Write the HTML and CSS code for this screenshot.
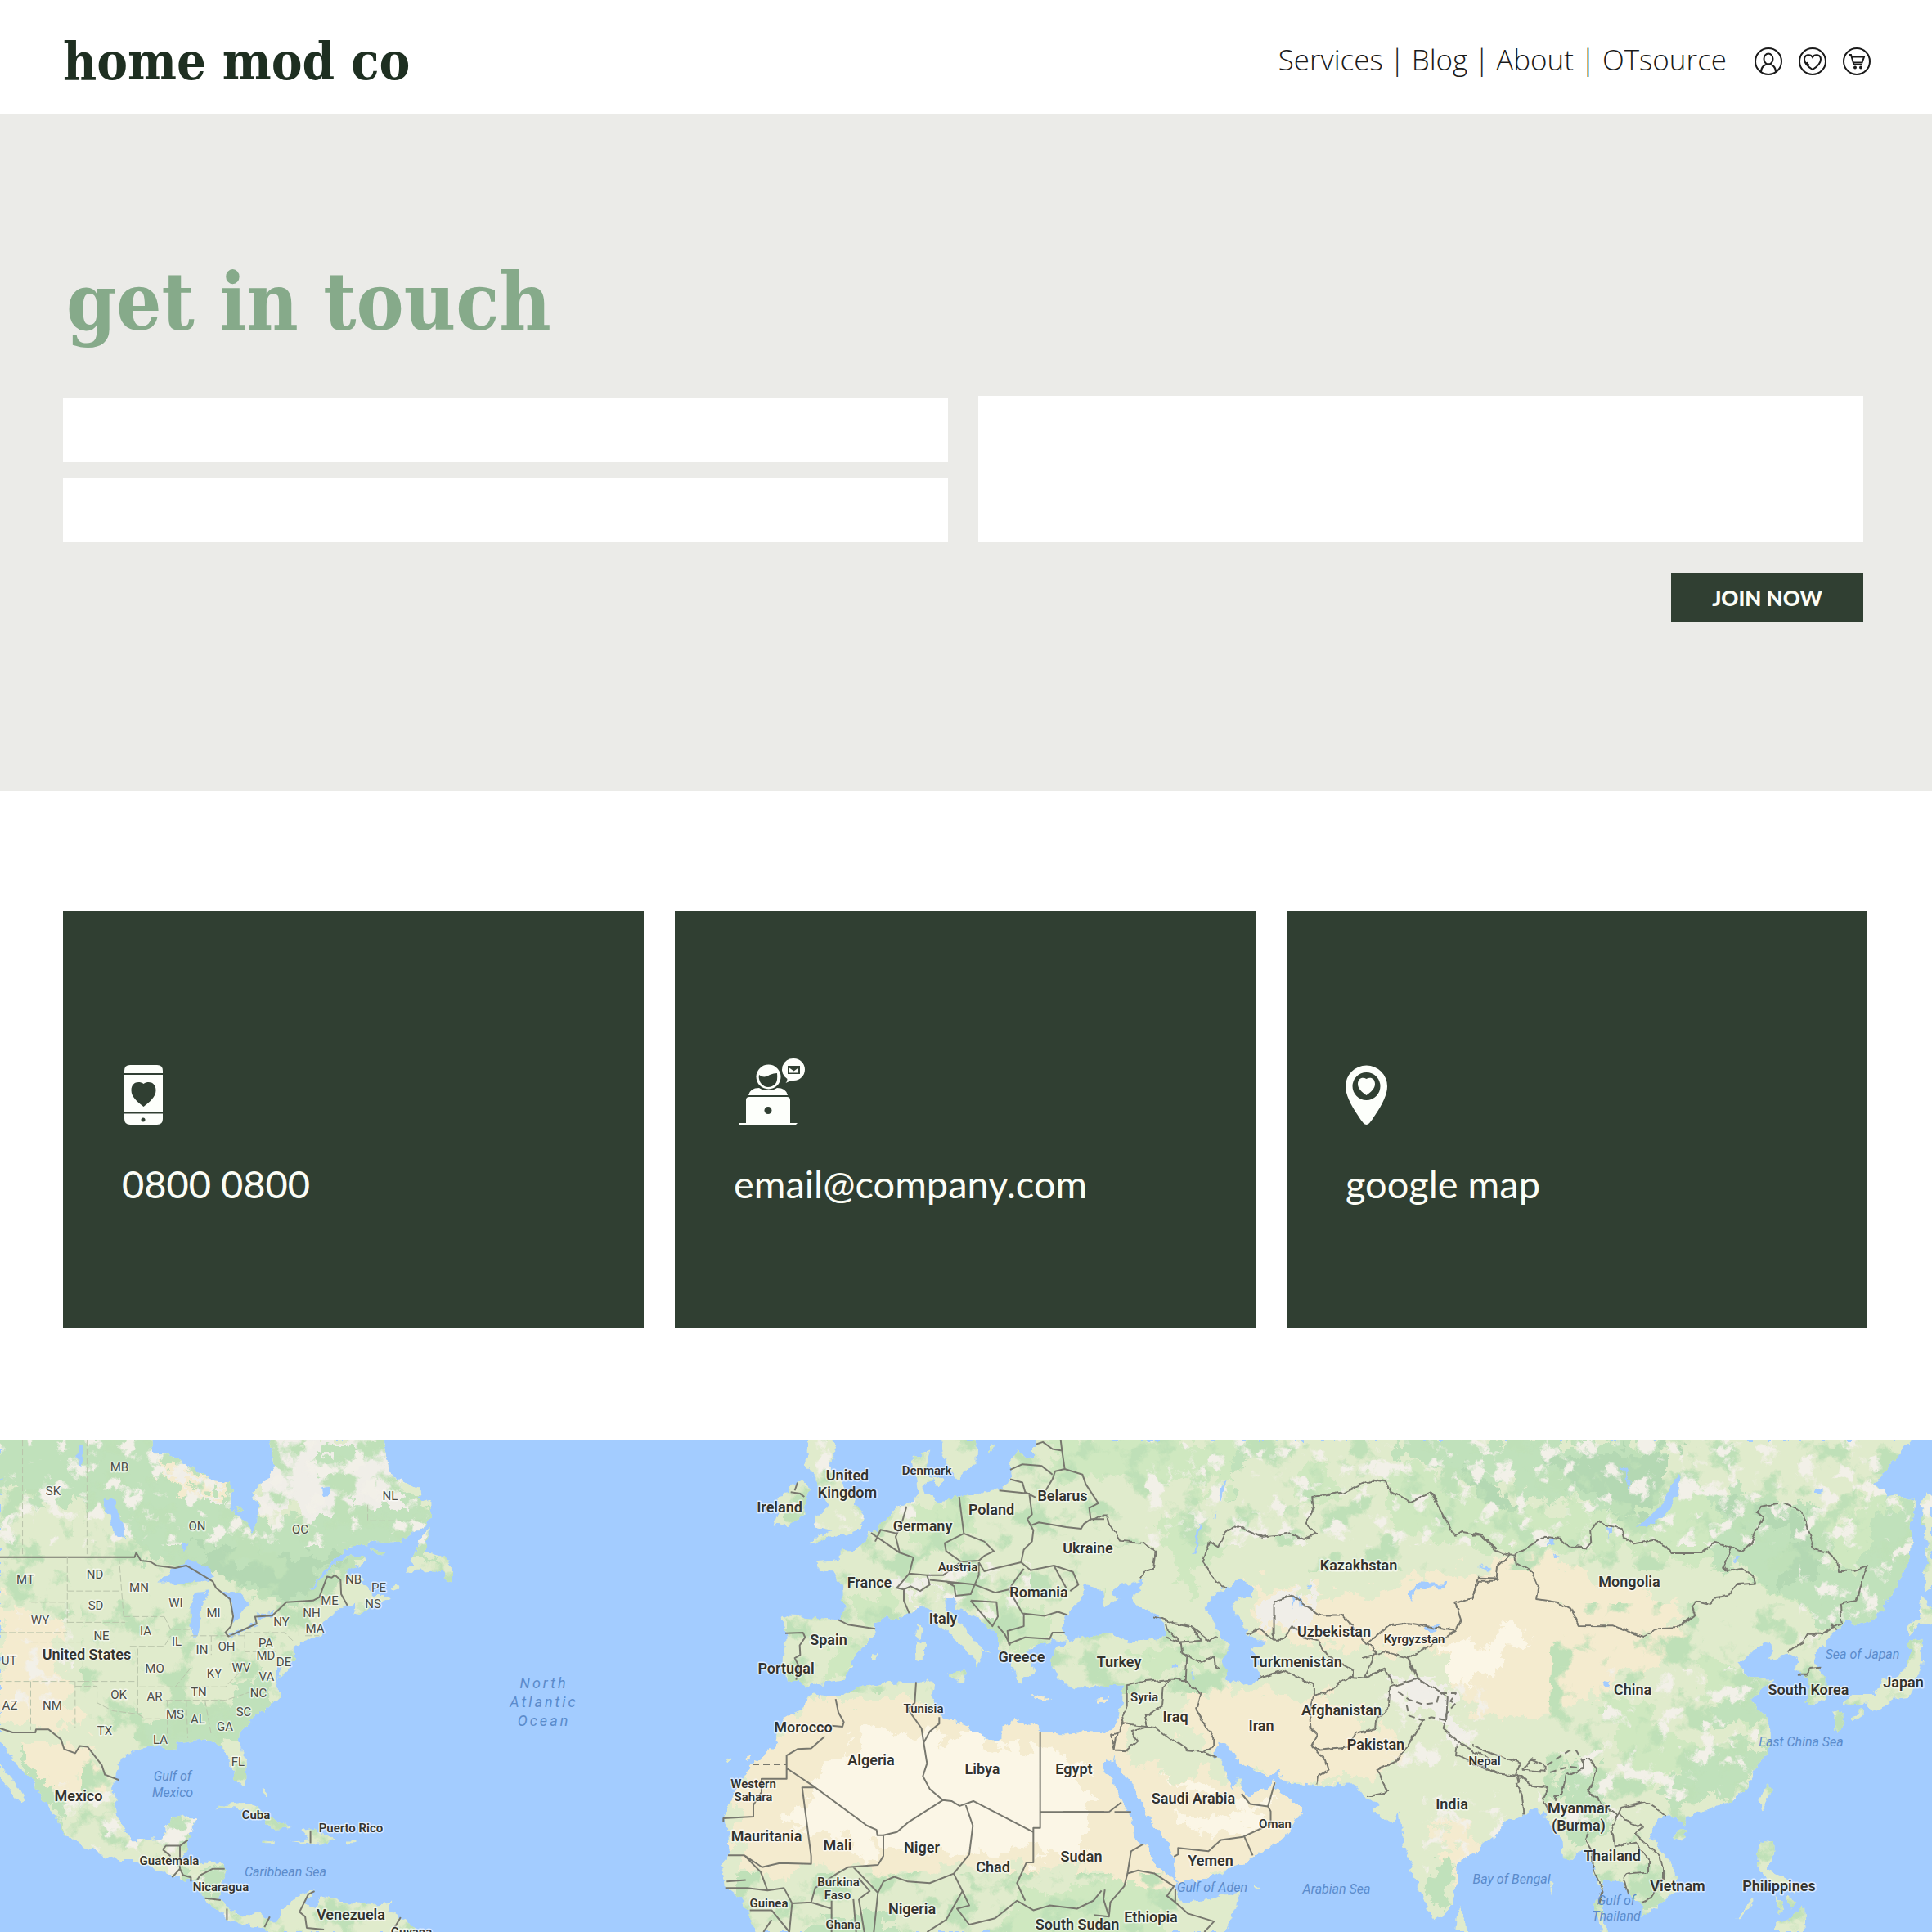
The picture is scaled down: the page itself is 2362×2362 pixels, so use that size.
FILE: index.html
```html
<!DOCTYPE html>
<html lang="en">
<head>
<meta charset="utf-8">
<meta name="viewport" content="width=device-width, initial-scale=1">
<title>home mod co – get in touch</title>
<link rel="stylesheet" href="styles.css">
</head>
<body>
<header class="site-header">
  <a class="logo" href="#">home mod co</a>
  <div class="header-right">
    <nav class="nav" aria-label="Main">
      <a href="#">Services</a><span>|</span><a href="#">Blog</a><span>|</span><a href="#">About</a><span>|</span><a href="#">OTsource</a>
    </nav>
    <div class="tools">
      <a href="#" aria-label="Account">
        <svg viewBox="0 0 36 36"><circle cx="18" cy="18" r="16"/><ellipse cx="18" cy="15" rx="5.5" ry="6.5"/><path d="M9 31c0-6 4-9.500 9-9.500s9 3.500 9 9.500"/></svg>
      </a>
      <a href="#" aria-label="Favourites">
        <svg viewBox="0 0 36 36"><circle cx="18" cy="18" r="16"/><path d="M18 28c-5-3-10-8-10-12.500 0-6 7.500-7 10-2.500 2.500-4.500 10-3.500 10 2.500C28 20 23 25 18 28zM11 19c.5 1.500 1.500 3 3 4"/></svg>
      </a>
      <a href="#" aria-label="Cart">
        <svg viewBox="0 0 36 36"><circle cx="18" cy="18" r="16"/><path d="M8 10h3l3.500 12h10M12 12.500h15l-2.500 7H14"/><circle cx="16" cy="25.500" r="1"/><circle cx="23" cy="25.500" r="1"/></svg>
      </a>
    </div>
  </div>
</header>

<main>
  <section class="contact">
    <h1>get in touch</h1>
    <form class="form">
      <div class="fields">
        <input type="text" aria-label="Name">
        <input type="email" aria-label="Email">
      </div>
      <textarea aria-label="Message"></textarea>
      <button type="button">JOIN NOW</button>
    </form>
  </section>

  <section class="cards">
    <a class="card" href="#">
      <svg viewBox="0 0 90 84" aria-hidden="true">
        <path d="M3 20v-3q0-7 7-7h33q7 0 7 7v3zM3 22h47v45H3zM3 69.500h47V76q0 7-7 7H10q-7 0-7-7z"/>
        <path class="cut" d="M26.500 61C19 55 11.500 49 11.500 41c0-10 9-12 15-8 6-4 15-2 15 8 0 8-7.500 14-15 20z"/><circle class="cut" cx="26" cy="77" r="2.500"/>
      </svg>
      <span>0800 0800</span>
    </a>
    <a class="card" href="#">
      <svg viewBox="0 0 90 84" aria-hidden="true">
        <path d="M7 81h8V53q0-4 4-4h46q4 0 4 4v28h9l-2 2H7zM18 47q2-9 13-9 4 3 11 3t11-3q11 0 13 9z"/>
        <circle cx="42.500" cy="24.500" r="15"/><path class="cut" d="M31 22q6 5 13 0 5-2 9-2 1 9-2 13-4 4-9 4t-9-5q-3-5-2-10z"/>
        <circle class="cut" cx="42" cy="65.500" r="4.500"/>
        <path d="M73.500 2a13.500 13.500 0 0 1 0 27q-5 0-10 3 2-2 2-5A13.500 13.500 0 0 1 73.500 2z"/><path class="cut" d="M66 11h15v10H66z"/><path d="M68 13.500l5.500 4 5.500-4V19.500H68z"/>
      </svg>
      <span>email@company.com</span>
    </a>
    <a class="card" href="#">
      <svg viewBox="0 0 90 84" aria-hidden="true">
        <path fill-rule="evenodd" d="M25.500 83Q22 83 16 73 0 50 0 36a25.500 25.500 0 0 1 51 0q0 14-16 37-6 10-9.500 10zM8.500 36a17 17 0 0 0 34 0 17 17 0 0 0-34 0z"/>
        <path d="M25.500 47C20 43 15 39 15 33c0-7 6-9 10.500-6C30 24 36 26 36 33c0 6-5 10-10.500 14z"/>
      </svg>
      <span>google map</span>
    </a>
  </section>

  <section class="map" aria-label="World map">
  <svg viewBox="0 0 2362 602" role="img">
    <defs>
      <filter id="rough" x="0" y="0" width="100%" height="100%" color-interpolation-filters="sRGB">
        <feTurbulence type="fractalNoise" baseFrequency=".09" numOctaves="3" seed="4"/>
        <feDisplacementMap in="SourceGraphic" scale="11" xChannelSelector="R" yChannelSelector="G"/>
      </filter>
      <filter id="wobble" x="0" y="0" width="100%" height="100%" color-interpolation-filters="sRGB">
        <feTurbulence type="fractalNoise" baseFrequency=".03" numOctaves="2" seed="4"/>
        <feDisplacementMap in="SourceGraphic" scale="18" xChannelSelector="R" yChannelSelector="G"/>
      </filter>
      <filter id="ragged" x="-10%" y="-10%" width="120%" height="120%" color-interpolation-filters="sRGB">
        <feTurbulence type="fractalNoise" baseFrequency=".035" numOctaves="5" seed="9"/>
        <feDisplacementMap in="SourceGraphic" scale="60" xChannelSelector="R" yChannelSelector="G"/>
      </filter>
      <filter id="flecks" x="0" y="0" width="100%" height="100%" color-interpolation-filters="sRGB">
        <feTurbulence type="fractalNoise" baseFrequency=".04" numOctaves="6" seed="21"/>
        <feColorMatrix values="0 0 0 0 .95  0 0 0 0 .94  0 0 0 0 .91  9 0 0 0 -5.100"/>
        <feComposite in2="SourceAlpha" operator="in"/>
      </filter>
      <filter id="woods" x="0" y="0" width="100%" height="100%" color-interpolation-filters="sRGB">
        <feTurbulence type="fractalNoise" baseFrequency=".025" numOctaves="5" seed="7"/>
        <feColorMatrix values="0 0 0 0 .75  0 0 0 0 .88  0 0 0 0 .72  9 0 0 0 -4.900"/>
        <feComposite in2="SourceAlpha" operator="in"/>
      </filter>
      <path id="america" transform="matrix(.38265 0 0 .39031 0 -10)" d="M-20 0H480L490 75L545 75L590 100L640 130L690 155L740 160L738 235L755 260L790 285L800 315L822 300L828 255L818 220L806 185L850 150L878 110L870 60L858 0H1222L1240 90L1245 130L1275 150L1335 180L1340 205L1378 225L1380 270L1350 300L1280 345L1190 350L1115 358L1060 410L1010 470L985 495L1000 490L1075 410L1120 388L1165 390L1170 410L1120 430L1105 450L1165 455L1160 480L1195 515L1245 515V525L1185 550L1145 580L1130 575L1140 540L1110 545L1050 575L1030 610L1020 640L970 655L935 680V710L920 750L895 770L900 740L885 740L890 800L892 830L850 870L800 905L768 935L765 970L790 1050V1095L775 1110L745 1080L735 1030L715 990L680 975L640 965L600 970L560 980V1000L500 985L440 995L390 1025L370 1070L365 1130L370 1190L400 1250L430 1280L520 1275L545 1215L590 1205L630 1210L610 1250L600 1300L580 1345H640L700 1350L718 1370L712 1420L700 1470L740 1500L780 1520L820 1505L860 1530L880 1540L900 1500L950 1460L1000 1435L975 1480L1010 1490L1030 1455L1090 1475L1190 1480L1250 1475L1240 1500L1280 1525L1400 1600H870L845 1555L790 1545L730 1530L700 1500L660 1480L620 1410L560 1395L500 1375L440 1345H390L330 1330L250 1290L190 1250L180 1210L150 1170L100 1090L50 1040L0 970ZM-20 1020L40 1090L80 1160L70 1165L30 1120L-20 1070ZM1380 300L1350 320L1320 400L1298 440L1380 435L1410 440L1445 475V420L1420 390L1360 375L1365 330ZM1175 362L1230 380L1215 388ZM1245 495L1270 475L1275 495L1250 505ZM690 1185L720 1168L780 1163L830 1188L880 1215L930 1240L870 1245L850 1220L780 1187L720 1177ZM930 1285L985 1280L960 1250L1000 1246L1070 1280L1010 1292ZM838 1283H880V1292H838ZM1102 1282H1138V1292H1102ZM838 1115L855 1135L845 1140ZM750 240L775 245L760 252Z"/>
      <path id="europe" transform="matrix(.33333 0 0 .39031 850 -10)" d="M1245 0V80L1215 85L1180 55L1160 90L1155 125L1160 155L1115 180L1075 185L1010 205L960 200L930 215L880 220L850 200L840 165L870 150L845 120L865 60L830 70L800 90L810 150L820 205L800 215L770 225L735 240L700 270L675 300L640 318L620 345L580 375L530 375V405L445 410L450 430L505 440L540 480L545 560L530 590L350 578L320 590L332 640L320 740L330 780L380 778L410 800L450 790L545 780L575 740L570 720L660 630V600L700 585L740 590L780 570L830 550L870 570L890 600L960 660L1020 700L1030 750L1050 705L1045 680L1085 695L1030 660L975 600L920 560L915 520L945 520L960 550L1030 580L1110 640V680L1160 730L1190 795L1215 770L1245 745L1220 710L1215 680L1300 660L1310 650L1370 660L1345 620L1370 560L1420 520L1430 480H1500V0ZM1310 685L1380 665L1440 655L1470 635H1500V800H1440L1390 800L1330 770L1305 730ZM893 0L905 70L940 130L960 150L1000 115L1030 100L1035 0ZM872 140H905L900 170L870 165ZM415 0H480L520 60L490 110L520 140L550 180L590 230L620 260L615 300L540 325L490 330L425 355L450 330L500 310L430 295L440 270L490 230L460 190L440 150L410 110V60ZM345 170L390 155L420 180L400 220V260L340 300L290 290L310 250L300 200L345 195ZM815 610H835L830 650L815 645ZM805 660H840L845 700L825 720L808 715ZM920 755L995 752L990 790L950 775ZM1230 828L1300 832L1290 842L1240 840ZM643 700H665V712H643ZM1080 40L1100 45L1080 75ZM425 815L450 830L515 835L600 800L700 790L800 785L850 775L880 795L870 830L880 860L900 895L1000 915L1010 940L1100 975L1130 960V920L1170 905L1240 920L1270 940L1400 955L1440 940L1500 955V1600H250L210 1540L200 1510L160 1460L110 1425L100 1370L125 1320L120 1240L103 1215L140 1140L180 1080L215 1040L300 985L305 940L330 900L390 870ZM105 1025L130 1030L120 1040ZM185 1020L205 1005L195 1030Z"/>
      <path id="midasia" transform="matrix(.33801 0 0 .39031 1300 -10)" d="M0 0H1580V1250L1500 1310L1425 1350L1420 1430L1400 1500L1345 1530L1320 1500L1260 1370L1230 1290L1215 1190L1190 1225L1150 1210L1120 1185L1145 1165L1090 1145L1050 1105L920 1110L800 1100L775 1060L740 1080L690 1060L640 1040L600 985L555 975L545 1005L580 1050L600 1090L620 1125L625 1090H640V1125L670 1140L740 1120L765 1090L780 1130L865 1185L830 1240L800 1270L740 1310L600 1370L520 1400L415 1415L400 1340L380 1290L300 1200L280 1150L240 1100L185 1035L188 1005L178 1040L155 1035L120 985L140 1040L200 1130L250 1230L260 1280L300 1300L340 1370L410 1410L405 1440L430 1475L500 1470L630 1445L625 1490L570 1600H0V950L80 940L160 945L190 920L210 850L215 795L100 800L0 795V660L100 640L150 630L250 660L330 650L370 640L365 600L320 565L250 535L270 490L300 460L245 475L190 490L180 510L200 525L150 550L140 520L130 490L65 480L10 560L0 600ZM120 838L165 833L150 850L125 850ZM1425 1490L1460 1540L1465 1600H1415ZM695 1424H715V1430H695Z"/>
      <path id="eastasia" transform="matrix(.35842 0 0 .39031 1800 -10)" d="M0 0H1530L1500 26L1440 90L1370 165L1400 185L1410 210L1470 200L1515 225L1500 290L1495 390L1440 500L1370 590L1310 605L1275 590L1245 620L1220 640L1205 665L1165 695L1170 730L1205 770L1210 830L1180 850H1140L1150 790L1140 770L1100 750L1110 710L1080 695L1010 720L1025 670L990 665L950 700L910 730L950 775H1035L1000 800L950 840L990 880L1015 940V990L960 1070L930 1120L880 1160L800 1185L725 1205L720 1235L700 1205L640 1210L605 1260L640 1310L690 1370L695 1440L640 1480L580 1525L590 1490L530 1440L500 1410L450 1405L440 1440V1500L470 1600H450L420 1490L440 1440L405 1350L380 1310L345 1345L310 1340L305 1280L265 1230L245 1190L215 1185L180 1200L120 1215L80 1250L30 1295L0 1320ZM1535 225L1550 190L1600 240V480L1540 500L1550 400L1545 300L1530 290ZM1530 525L1600 560V620L1530 600L1490 640L1480 610L1520 590ZM1490 660L1530 650L1535 720L1510 790L1495 835L1440 840L1370 880L1350 855L1290 855L1260 850L1300 825L1370 825L1400 780L1470 760L1490 710ZM1225 880L1255 870L1270 905L1250 945L1230 930L1240 900ZM1290 895L1330 868L1340 880L1300 905ZM1010 1110L1020 1130L990 1190L975 1150ZM680 1270L710 1245L735 1250L710 1285ZM980 1280L1030 1285L1025 1340L1005 1370L1070 1400L1105 1450L1050 1420L1000 1395L970 1365ZM1040 1455L1065 1475L1050 1510L1035 1490ZM1080 1450L1100 1470L1080 1495ZM1030 1540L1080 1530L1130 1490L1138 1600H1030ZM900 1525L955 1465L962 1470L905 1530ZM265 1410L275 1415L268 1450Z"/>
      <clipPath id="land"><use href="#america"/><use href="#europe"/><use href="#midasia"/><use href="#eastasia"/></clipPath>
    </defs>

    <rect class="sea" width="2362" height="602"/>
    <g filter="url(#rough)">
      <g clip-path="url(#land)">
        <rect class="plain" width="2362" height="602"/>
        <g filter="url(#ragged)">
          <g class="meadow">
            <path d="M1120 80L1180 70V130L1110 130ZM1040 190L1090 180L1100 220L1040 220ZM1280 0H1560L1500 60L1380 50L1290 40ZM1180 170L1290 220L1260 260L1180 200ZM1020 250L1060 260L1020 300ZM1310 270L1450 250L1480 290L1400 280ZM1240 560L1420 520V620H1200ZM2090 270L2170 300L2150 360L2080 330ZM1960 310L2100 380L2000 430ZM1420 90L1500 130L1450 200ZM1590 20L1650 60L1580 90ZM1700 30L1900 90L2100 60L2200 100L2340 60L2260 240L2100 150L1700 120Z"/>
          </g>
          <g class="forest">
            <path d="M-20-20H190L280 50L330 110L470 60L530 80V140L430 150L380 200L300 195L260 160L170 145L130 85L0 65Z"/>
            <path d="M160 340L260 330L330 280L345 310L280 370L180 380ZM40 240L70 250V300L45 290ZM30 380L60 420L80 470L70 480L30 420ZM205 470H245L220 520L270 530V560H230ZM1520 0L1540 20L1500 60ZM1700 0H2050L2040 60L1980 90L1850 60L1720 30ZM2100 60L2220 80L2250 160L2340 60V230L2220 240L2200 200L2100 150ZM1900 400L1960 400V480L1930 500ZM2080 380L2180 370L2120 440L2020 440ZM1740 530L1775 510L1765 590ZM990 580H1090V620H990ZM2100 320L2150 300L2160 350L2080 350ZM1940 530L2040 560L2000 590Z"/>
          </g>
          <g class="deep">
            <path d="M240 130L420 150L380 190L300 185L250 160ZM1880 20L2050 10L2040 60L1990 90L1920 60ZM1960 85L2030 100L2000 110ZM2110 70L2200 90L2240 150L2170 180L2190 110L2100 90ZM1780 20L1830 60L1870 90L1810 80Z"/>
          </g>
          <g class="sand">
            <path d="M0 200L70 220L80 290L90 350L0 350ZM20 370L110 370L130 420L70 440ZM1000 320H1360L1400 400L1580 420L1620 500L1400 560L1350 520L900 530V380ZM1440 300L1640 320L1720 380L1680 420L1560 420L1450 360ZM1520 170L1640 190L1880 140L1980 180L2060 210L2030 270L1900 330L1800 340L1760 250L1650 260L1540 240ZM180 20L280 60L240 70ZM1760 470L1800 480L1780 540Z"/>
          </g>
          <path class="pale" d="M1060 350L1240 370L1330 400V510L1100 500L950 470ZM1770 250L1870 230L1840 280L1770 300ZM1440 470L1560 440L1500 490ZM1010 440L1100 480L1060 520ZM1410 400L1480 420L1500 440L1450 430Z"/>
          <path class="snow" d="M340 0H480L500 90L430 80L400 100L310 80ZM190 30L290 70L240 60ZM1700 290L1770 300L1800 390L1770 370ZM1090 175L1150 175L1110 200ZM1540 190L1600 180V230H1540Z"/>
          <path class="forest" d="M385 10L440 20L420 55L390 30Z"/>
        </g>
        <path filter="url(#woods)" d="M0 60H90V220H0ZM100 0H560V602H0V440H100ZM960 0H1350V310H960ZM1250 0H1600V130H1250ZM1600 0H2362V160H1600ZM1900 200H2362V602H1880ZM900 530H1440V602H900ZM1330 230H1520V310H1330Z"/>
        <path filter="url(#flecks)" d="M0 0H560V130H0ZM20 200H90V330H20ZM60 420H300V602H60ZM1400 0H2362V130H1400ZM1120 150H1260V220H1120ZM1680 290H1820V400H1680ZM1960 280H2150V440H1960ZM1740 430H1840V540H1740ZM2200 100H2362V260H2200ZM960 0H1120V110H960ZM1880 380H2010V480H1880Z"/>
      </g>
      <g class="sea">
        <path transform="matrix(.38265 0 0 .39031 0 -10)" d="M505 475L550 435L600 403L670 425L685 455L640 470L580 475ZM612 640L608 560L630 505L670 500L650 530L640 570L635 640ZM700 500H760L795 535L745 600L735 530ZM730 640L820 595V605L735 650ZM820 570L880 562L870 578L820 582ZM335 210L365 215L385 280L398 340L375 330L345 260ZM580 350L600 355L590 380ZM250 40L270 45L260 110L245 100ZM1030 180L1050 175L1055 200L1035 205Z"/>
        <path transform="matrix(.33801 0 0 .39031 1300 -10)" d="M512 550L540 515L600 480L640 465L680 480V515L640 520L605 545L640 590L670 640L725 655L715 670L675 680L700 700L705 785L640 795L600 780L570 720L600 680L575 650L550 610L530 580ZM1240 510L1280 475L1390 475L1385 487L1280 490L1260 530ZM825 515L840 520L830 555ZM850 510L868 550L855 552ZM870 480L900 485L895 495ZM590 150L565 180L560 200L570 225L575 200L580 175ZM555 250L545 275L550 280ZM490 290L465 385L475 380L498 300ZM1310 612L1360 610L1350 622L1315 625ZM393 730H415V742H393ZM467 745L480 775L470 770Z"/>
        <path transform="matrix(.35842 0 0 .39031 1800 -10)" d="M560 300L600 270L660 215L690 140L708 130L700 200L660 260L600 300ZM460 300H475L465 338ZM255 338H280V358L262 355ZM270 380L295 392L275 396ZM900 385L915 390L895 412ZM445 780L470 785L465 798L450 795ZM20 420L60 430V440ZM1165 180H1190V195H1165ZM495 115L520 112L540 160L535 190L520 130Z"/>
      </g>
    </g>

    <g class="borders">
      <g transform="matrix(.38265 0 0 .39031 0 -10)">
        <path d="M0 394H430L435 380L450 405L480 408L500 420L560 428L595 420L680 470L690 490L735 525L745 580L738 610L720 630L730 642L820 602L815 580L870 577L915 535L1000 530L1020 520L1045 455L1060 458L1070 450L1088 465L1090 510L1110 545M0 930L40 943H113L115 933H155L195 965L205 995L240 1008L255 985L280 988L325 1045L335 1075L380 1092M520 1310L530 1298H575L600 1280M575 1298V1370L550 1397M575 1370L585 1390L610 1397V1410M520 1310L545 1330M630 1405L640 1390L680 1370H718M655 1462L705 1468M725 1495V1530M845 1553L862 1520M1005 1440L985 1450L957 1505L975 1520L980 1555L1035 1560M1280 1522L1260 1555M992 1250V1290"/>
        <path class="state" d="M72 26V394M278 26V394M215 394V600M215 500H385M380 394L395 580M215 598H400M0 630H215M100 535H215M395 580H525M415 673H525L545 640M525 580L545 620H610M100 660H265V783H0M265 783H440V673M98 783V935M240 783V930M240 798H310V850L360 875L440 885V783M445 800H560L610 740V640M440 885L465 900H510M535 842V970M595 842L600 960M655 842L675 950M530 842H720L850 800M560 800H720L790 730M675 640V700M782 630H910L940 660M782 630V690H880M955 535V640M975 640H1020M675 640H782M610 640H675M1175 230V280H1345"/>
      </g>
      <path transform="matrix(.33333 0 0 .39031 850 -10)" d="M1250 40L1275 33L1310 55L1345 60L1340 26M1345 60L1355 118L1320 125L1310 150L1285 185M1355 118L1420 135L1432 165L1478 225L1445 240L1450 275H1500M1155 120L1200 103L1270 108L1310 135M1155 150L1200 160L1210 190L1250 208M1115 185L1225 195L1235 260L1218 275L1240 310L1235 345L1205 370L1195 410L1095 430L1060 438L1040 410M1230 295L1260 285L1360 300L1415 305L1425 290L1450 275M968 205L985 320L915 350L920 375L975 408L1040 405L1060 390L1095 375L1060 345L985 320M775 235L760 280L735 330L750 380L800 395L785 445L740 490L765 495L790 485L825 500L860 480L850 450L785 445M645 318L750 380M660 345L680 308L740 320M860 465L920 470L1025 480L1040 450V410M850 450L910 450L975 408M765 495V530L785 570M920 470L950 485L955 515L1010 510L1025 480L1100 505L1150 495L1170 525L1200 570L1280 578L1330 565L1365 575M1205 430L1170 470L1150 495M1195 410L1230 435L1315 420L1385 440L1405 480L1375 500M1315 420L1360 490M1010 530L1105 535L1110 580L1090 610L1010 530M1205 570V610L1145 625L1150 665L1210 645L1300 650L1310 630H1355M1110 610L1135 635L1155 670M525 590L560 605L660 618M330 632L395 630L403 645L383 670L385 700L365 710L380 735L370 778M350 190L385 195L400 205M365 185L375 160M810 785L805 850L780 870L830 930L838 975L850 1040L835 1080L860 1120L908 1155L780 1225L740 1255L690 1265H668L665 1248L630 1235L440 1115L335 1055V1015L375 995L425 993L475 955M515 838L525 880L545 910L540 925L500 922M838 975L860 940L895 915V895M908 1155L940 1158L970 1173L1020 1158L1240 1255M1265 940V1242H1240V1350H1215L1180 1415L1210 1470M1265 1192H1500M335 1055V1088H243V1130L213 1170V1207L103 1212V1222M440 1115H392L425 1330V1355L310 1352L245 1365L180 1328H120M690 1265V1330L670 1358L560 1365L520 1385L440 1430L425 1475L355 1478L325 1430L265 1438L240 1380L180 1328M115 1410L185 1405M110 1430H190L265 1438M990 1165L1018 1235L1005 1325L948 1385L860 1415L780 1410L730 1395L690 1410L670 1445L580 1365M948 1385L980 1440L1005 1485L960 1495L1005 1545L1100 1525L1180 1470L1240 1500L1300 1485L1400 1495L1460 1470L1490 1438M980 1440L920 1530L850 1568M670 1445L655 1568M500 1470V1568M425 1475L500 1495M600 1465L640 1440L600 1400M600 1465L620 1568M355 1478L345 1568L280 1500L200 1500M280 1530L250 1568M580 1465L590 1568"/>
      <path filter="url(#wobble)" transform="matrix(.33801 0 0 .39031 1300 -10)" d="M95 280L120 268H160L175 305L205 343L290 348L333 377L325 430L290 440L278 460M585 490L565 480L505 412L525 345L560 362L580 325L620 293L720 330L775 325L820 318L870 338L915 320L875 288L905 235L900 205L1015 190L1120 148L1165 155L1185 190L1240 215L1260 220L1330 190L1415 328L1440 315L1510 325L1568 370M1568 460L1500 458L1480 520L1418 538L1438 590L1420 625L1250 600L1180 608L1100 665L1035 600L1010 575H925L830 515L762 533V653H790L830 610L860 640L920 655L950 700L1050 750V770M1100 665L1130 690L1085 775L1030 770L950 820L905 830L890 880L895 930L920 950L900 985L950 1030L960 1060L920 1080L915 1108M665 635L710 620L762 653M705 775L800 748L870 780L905 795V830M900 985L930 998L1030 990L1060 945L1130 930L1135 895L1180 865L1185 800L1280 775L1250 710L1420 625M1250 710L1160 690L1080 710M1085 775L1165 745L1190 790M1280 775L1390 830L1385 905L1375 930L1440 980L1568 1040M1300 910L1270 950L1235 1000L1200 1035L1135 1060L1175 1130L1095 1145M1425 980L1420 1015L1568 1070M325 580L370 590L400 600L460 610L530 655L555 640M370 645L425 660L430 695L500 725L545 705L550 735L565 740M370 590L380 625L420 655M460 610L500 655L425 660M445 700L440 775L460 800L495 820L480 870L510 915L545 960V980L505 1005L450 1000L330 925L215 915L210 890L230 860V795L280 785L400 775L440 780M390 780L360 800L355 860L295 890L305 925L245 940L270 970L230 1000L185 998L175 950L205 940L215 915M195 940L185 998M505 1005L555 1020"/>
      <path transform="matrix(.33801 0 0 .39031 1300 -10)" d="M645 1135L675 1167L740 1175L765 1100M740 1175L750 1190V1230L650 1270L570 1280L525 1315L415 1305V1325L400 1332M655 1270L685 1328M0 1192H165M185 1192H245M165 1192L210 1162M290 1292L245 1315L232 1385L270 1375L330 1385L400 1425L375 1455L405 1475L450 1510L545 1535L510 1568M405 1475V1435M232 1385L220 1425L170 1475L165 1520L110 1515M150 1435L145 1465L165 1520"/>
      <path class="disputed" transform="matrix(.33801 0 0 .39031 1300 -10)" d="M1210 815L1250 840L1300 855L1350 850L1360 820L1420 820L1400 845L1420 850L1385 885L1385 905L1330 895L1300 905L1250 890L1240 850"/>
      <path filter="url(#wobble)" transform="matrix(.35842 0 0 .39031 1800 -10)" d="M0 325L35 322L75 370L125 388H145L245 330L300 335L330 360L390 365L408 345L405 310L430 278L455 293L510 305L515 330L550 352L620 340L660 360L680 382H780L825 348L880 360L920 375L950 350L990 270L970 255L985 235L1055 223L1125 250L1165 370L1210 378L1245 408L1250 438L1295 437L1350 420L1330 460L1310 530L1255 540L1260 600L1190 635L1145 635L1130 660L1075 695M145 388L150 410L205 440L225 485L218 525L290 535L335 557L362 607L480 608L540 630L585 643L640 618L700 615L760 575L750 550L765 530L810 540L830 520L870 515L900 480L965 475L960 460L920 430L870 438L857 425L885 365M125 388L87 420L82 468H18L0 525M1110 763L1140 762L1155 743L1187 740M1225 605L1245 620M0 980L40 1000L165 1040L150 1078L90 1072L0 1040M170 1060L200 1028L250 1048V1065L170 1060M155 1075L160 1095L150 1100L170 1140L177 1200M155 1075L195 1105L260 1115L240 1150L265 1190M285 1160V1140H305L320 1080L380 1055L375 1030L400 1025L425 1055L410 1100L395 1130L430 1145L440 1165L495 1205L470 1250L480 1260L485 1300L555 1285L600 1340V1380L530 1385L515 1400L530 1445M495 1205L510 1175L590 1160L625 1180L660 1205M500 1190L525 1220L580 1240L555 1260L640 1330L650 1370V1400L610 1460L575 1475M395 1260L385 1280L405 1310L410 1365L445 1440L430 1485"/>
      <path class="disputed" transform="matrix(.35842 0 0 .39031 1800 -10)" d="M255 1045L330 1000L355 1000L380 1040M265 1068L330 1050L380 1055"/>
      <path class="disputed" d="M920 397H962"/>
    </g>

    <g class="label state-label">
      <text x="146" y="39">MB</text><text x="65" y="68">SK</text><text x="241" y="111">ON</text><text x="367" y="115">QC</text><text x="477" y="74">NL</text><text x="31" y="176">MT</text><text x="116" y="170">ND</text><text x="170" y="186">MN</text><text x="215" y="205">WI</text><text x="261" y="217">MI</text><text x="117" y="208">SD</text><text x="49" y="226">WY</text><text x="124" y="245">NE</text><text x="178" y="239">IA</text><text x="216" y="252">IL</text><text x="247" y="262">IN</text><text x="277" y="258">OH</text><text x="325" y="254">PA</text><text x="325" y="269">MD</text><text x="347" y="277">DE</text><text x="344" y="228">NY</text><text x="381" y="217">NH</text><text x="385" y="236">MA</text><text x="403" y="202">ME</text><text x="432" y="176">NB</text><text x="463" y="186">PE</text><text x="456" y="206">NS</text><text x="11" y="275">UT</text><text x="189" y="285">MO</text><text x="262" y="291">KY</text><text x="295" y="284">WV</text><text x="326" y="295">VA</text><text x="316" y="315">NC</text><text x="298" y="338">SC</text><text x="275" y="356">GA</text><text x="243" y="314">TN</text><text x="189" y="319">AR</text><text x="145" y="317">OK</text><text x="12" y="330">AZ</text><text x="64" y="330">NM</text><text x="214" y="341">MS</text><text x="242" y="347">AL</text><text x="128" y="361">TX</text><text x="196" y="372">LA</text><text x="291" y="399">FL</text>
    </g>
    <g class="label country">
      <text x="106" y="269">United States</text><text x="96" y="442">Mexico</text><text x="429" y="587">Venezuela</text><text x="1036" y="50">United</text><text x="1036" y="71">Kingdom</text><text x="953" y="89">Ireland</text><text x="1128" y="112">Germany</text><text x="1212" y="92">Poland</text><text x="1299" y="75">Belarus</text><text x="1330" y="139">Ukraine</text><text x="1063" y="181">France</text><text x="1270" y="193">Romania</text><text x="1153" y="225">Italy</text><text x="1013" y="251">Spain</text><text x="961" y="286">Portugal</text><text x="1249" y="272">Greece</text><text x="1368" y="278">Turkey</text><text x="982" y="358">Morocco</text><text x="1065" y="398">Algeria</text><text x="1201" y="409">Libya</text><text x="1313" y="409">Egypt</text><text x="937" y="491">Mauritania</text><text x="1024" y="502">Mali</text><text x="1127" y="505">Niger</text><text x="1214" y="529">Chad</text><text x="1322" y="516">Sudan</text><text x="1115" y="580">Nigeria</text><text x="1317" y="599">South Sudan</text><text x="1407" y="590">Ethiopia</text><text x="1661" y="160">Kazakhstan</text><text x="1631" y="241">Uzbekistan</text><text x="1585" y="278">Turkmenistan</text><text x="1437" y="345">Iraq</text><text x="1542" y="356">Iran</text><text x="1640" y="337">Afghanistan</text><text x="1682" y="379">Pakistan</text><text x="1459" y="445">Saudi Arabia</text><text x="1480" y="521">Yemen</text><text x="1775" y="452">India</text><text x="1992" y="180">Mongolia</text><text x="1996" y="312">China</text><text x="2211" y="312">South Korea</text><text x="2327" y="303">Japan</text><text x="1930" y="457">Myanmar</text><text x="1930" y="478">(Burma)</text><text x="1971" y="515">Thailand</text><text x="2051" y="552">Vietnam</text><text x="2175" y="552">Philippines</text>
    </g>
    <g class="label country minor">
      <text x="313" y="464">Cuba</text><text x="429" y="480">Puerto Rico</text><text x="207" y="520">Guatemala</text><text x="270" y="552">Nicaragua</text><text x="503" y="607">Guyana</text><text x="1133" y="43">Denmark</text><text x="1171" y="161">Austria</text><text x="1129" y="334">Tunisia</text><text x="921" y="426">Western</text><text x="921" y="442">Sahara</text><text x="1025" y="546">Burkina</text><text x="1024" y="562">Faso</text><text x="940" y="572">Guinea</text><text x="1031" y="598">Ghana</text><text x="1729" y="249">Kyrgyzstan</text><text x="1399" y="320">Syria</text><text x="1559" y="475">Oman</text><text x="1815" y="398">Nepal</text>
    </g>
    <g class="label water">
      <text x="211" y="417">Gulf of</text><text x="211" y="437">Mexico</text><text x="349" y="534">Caribbean Sea</text><text x="1482" y="553">Gulf of Aden</text><text x="1634" y="555">Arabian Sea</text><text x="1848" y="543">Bay of Bengal</text><text x="2277" y="268">Sea of Japan</text><text x="2202" y="375">East China Sea</text><text x="1976" y="569">Gulf of</text><text x="1976" y="588">Thailand</text>
    </g>
    <g class="label water ocean">
      <text x="665" y="304">North</text><text x="665" y="327">Atlantic</text><text x="665" y="350">Ocean</text>
    </g>
  </svg>
  </section>
</main>
</body>
</html>
```
FILE: styles.css
```css
* { box-sizing: border-box; }

body {
  margin: 0;
  background: #fff;
  color: #1a1a1a;
  font-family: Lato, "Open Sans", sans-serif;
}

a { color: inherit; text-decoration: none; }

.site-header {
  display: flex;
  align-items: center;
  justify-content: space-between;
  height: 139px;
  padding: 10px 74px 0 77px;
}

.logo,
h1 {
  font-family: "DejaVu Serif Condensed", "DejaVu Serif", serif;
  font-weight: 700;
}

.logo { color: #1e2f21; font-size: 63px; line-height: 74px; }

.header-right { display: flex; align-items: center; gap: 33px; }

.nav {
  display: flex;
  gap: 8px;
  padding-bottom: 4px;
  font-family: "Open Sans", "Noto Sans", sans-serif;
  font-size: 35px;
  font-weight: 300;
  line-height: 40px;
}

.tools { display: flex; gap: 18px; }
.tools a, .tools svg { display: block; width: 36px; height: 36px; }
.tools svg { fill: none; stroke: #1a1a1a; stroke-width: 2; }

.contact {
  padding: 166px 84px 207px 77px;
  background: #ebebe8;
}

h1 {
  margin: 0 0 51px;
  padding-left: 4px;
  color: #86aa8a;
  font-size: 97px;
  line-height: 128px;
}

.form {
  display: grid;
  grid-template-columns: 1fr 1fr;
  gap: 38px 37px;
}

.fields { display: grid; gap: 19px; padding-top: 2px; }

input, textarea, button {
  display: block;
  width: 100%;
  margin: 0;
  border: 0;
  border-radius: 0;
  font: inherit;
}

input, textarea { padding: 16px 24px; background: #fff; font-size: 28px; }
input { height: 79px; }
textarea { height: 179px; resize: none; }

button {
  grid-column: 2;
  justify-self: end;
  width: 235px;
  height: 59px;
  background: #303f32;
  color: #fbfdf6;
  font-size: 26px;
  font-weight: 900;
}

.cards {
  display: grid;
  grid-template-columns: repeat(3, 1fr);
  gap: 38px;
  padding: 147px 79px 136px 77px;
}

.card {
  display: flex;
  flex-direction: column;
  align-items: flex-start;
  height: 510px;
  padding: 178px 72px 0;
  background: #303f32;
  color: #fbfdf6;
  font-size: 47px;
  line-height: 56px;
}

.card svg { width: 90px; height: 84px; margin-bottom: 43px; fill: #fdfffb; }
.card .cut { fill: #303f32; }

.map svg { display: block; width: 100%; height: auto; }

.sea { fill: #a3ccff; }
.plain { fill: #e0ebcc; }
.forest { fill: #c0e1bb; }
.deep { fill: #b4d8b3; }
.meadow { fill: #cfe8c0; }
.sand { fill: #f4ebcf; }
.pale { fill: #fbf6e6; }
.snow { fill: #f0eee8; }

.borders path {
  fill: none;
  stroke: #77776e;
  stroke-width: 2;
  stroke-linejoin: round;
  vector-effect: non-scaling-stroke;
}
.borders .state { stroke: #b9c4ab; stroke-width: 1; stroke-dasharray: 8 3; }
.borders .disputed { stroke-dasharray: 8 5; }

.label {
  font-family: Roboto, sans-serif;
  text-anchor: middle;
  paint-order: stroke;
  stroke: #fff;
  stroke-opacity: .6;
  stroke-width: 3px;
  stroke-linejoin: round;
}
.state-label { fill: #4c4d47; font-size: 15px; }
.country { fill: #33332f; font-size: 18px; font-weight: 600; }
.minor { font-size: 15px; }
.water { fill: #5b8bcb; stroke: none; font-size: 16px; font-style: italic; }
.ocean { font-size: 18px; letter-spacing: 3px; }
```
